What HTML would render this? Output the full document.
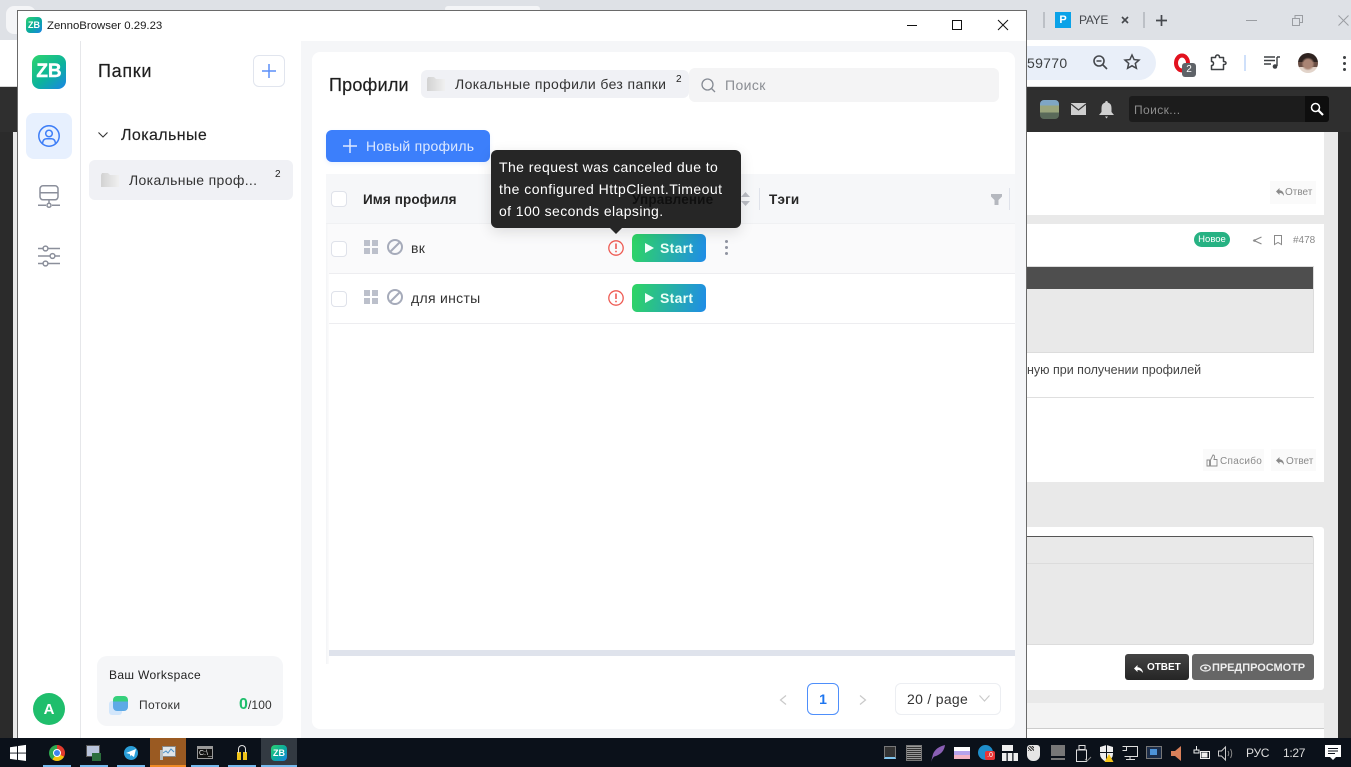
<!DOCTYPE html>
<html lang="ru"><head><meta charset="utf-8"><title>ZennoBrowser</title>
<style>
*{box-sizing:border-box}
html,body{margin:0;padding:0}
body{width:1351px;height:767px;overflow:hidden;position:relative;background:#e9e9e9;font-family:"Liberation Sans",sans-serif;color:#1f1f1f}
.a{position:absolute}
.t{position:absolute;white-space:nowrap;line-height:20px}
svg{position:absolute;overflow:visible}
.f{position:absolute;width:18px;height:14px;background:linear-gradient(90deg,#d2d2d2,#f0f0f0);clip-path:polygon(0 2px,1px 0,7px 0,9px 2px,100% 2px,100% 100%,0 100%)}
</style></head><body>
<!-- background browser -->
<div class="a" style="left:0;top:0;width:1351px;height:40px;background:#dee1e6"></div>
<div class="a" style="left:6px;top:6px;width:30px;height:28px;background:#f4f5f7;border-radius:8px"></div>
<div class="a" style="left:445px;top:6px;width:95px;height:6px;background:#f4f5f7;border-radius:6px"></div>
<div class="a" style="left:0;top:40px;width:1351px;height:47px;background:#fff"></div>
<div class="a" style="left:0;top:86px;width:1351px;height:1px;background:#d5d5d5"></div>
<div class="a" style="left:1000px;top:46px;width:156px;height:34px;background:#e9eff9;border-radius:0 17px 17px 0"></div>
<div class="a" style="left:0;top:87px;width:13px;height:651px;background:#2b2b2b"></div>
<div class="a" style="left:1338px;top:87px;width:13px;height:651px;background:#2b2b2b"></div>
<div class="a" style="left:0;top:87px;width:1351px;height:45px;background:#2f2f2f"></div>
<!-- tabs -->
<div class="a" style="left:1043px;top:12px;width:2px;height:16px;background:#bcc0c6"></div>
<div class="a" style="left:1055px;top:12px;width:16px;height:16px;background:#0aa2e8;color:#fff;font:700 11px/16px 'Liberation Sans',sans-serif;text-align:center">P</div>
<div class="t" style="left:1079px;top:10px;font-size:12px;letter-spacing:-.3px;color:#45484d;width:30px;overflow:hidden">PAYEE</div>
<svg style="left:1121px;top:16px" width="8" height="8"><path d="M1 1l6 6M7 1l-6 6" stroke="#45484d" stroke-width="1.600"/></svg>
<div class="a" style="left:1143px;top:12px;width:2px;height:16px;background:#bcc0c6"></div>
<svg style="left:1156px;top:15px" width="11" height="11"><path d="M5.500 0v11M0 5.500h11" stroke="#45484d" stroke-width="1.700"/></svg>
<svg style="left:1246px;top:20px" width="11" height="1"><path d="M0 .5h11" stroke="#9a9da2"/></svg>
<svg style="left:1292px;top:15px" width="11" height="11"><path d="M.5 3.500h7v7h-7zM3 3.500V.5h7.500v7H7.500" fill="none" stroke="#9a9da2"/></svg>
<svg style="left:1338px;top:15px" width="11" height="11"><path d="M.5.500l10 10M10.500.500l-10 10" stroke="#9a9da2"/></svg>
<!-- toolbar -->
<div class="t" style="left:1027px;top:53px;font-size:14px;letter-spacing:.3px;color:#3d4043">59770</div>
<svg style="left:1093px;top:55px" width="15" height="15" viewBox="0 0 15 15" fill="none" stroke="#45484d" stroke-width="1.600"><circle cx="6" cy="6" r="5"/><path d="M9.500 9.500l4.500 4.500M3.500 6h5"/></svg>
<svg style="left:1124px;top:54px" width="16" height="16" viewBox="0 0 16 16"><path d="M8 1l2.100 4.600 4.900.5-3.700 3.300 1.100 4.900L8 11.800l-4.400 2.500 1.100-4.900L1 6.100l4.900-.5z" fill="none" stroke="#45484d" stroke-width="1.500"/></svg>
<svg style="left:1174px;top:54px" width="16" height="18" viewBox="0 0 16 18"><ellipse cx="8" cy="9" rx="6" ry="7.500" fill="none" stroke="#e2111e" stroke-width="4"/></svg>
<div class="a" style="left:1182px;top:63px;width:14px;height:14px;background:#5f6368;border-radius:3px;color:#fff;font:10px/14px 'Liberation Sans',sans-serif;text-align:center">2</div>
<svg style="left:1210px;top:54px" width="17" height="17" viewBox="0 0 17 17"><path d="M1.500 3.500h4q0-2.500 2-2.500t2 2.500h4v4q2.500 0 2.500 1.500t-2.500 1.500v5h-12v-4q2 0 2-2t-2-2z" fill="none" stroke="#3d4043" stroke-width="1.500" stroke-linejoin="round"/></svg>
<div class="a" style="left:1244px;top:55px;width:2px;height:16px;background:#cfe0fa"></div>
<svg style="left:1264px;top:56px" width="16" height="13" viewBox="0 0 16 13"><path d="M0 1h11M0 4.500h11M0 8h7M13 1h3M13 1v9" fill="none" stroke="#3d4043" stroke-width="1.400"/><circle cx="11" cy="10.500" r="2.300" fill="#3d4043"/></svg>
<div class="a" style="left:1298px;top:53px;width:20px;height:20px;border-radius:50%;background:radial-gradient(circle at 50% 55%,#a98474 0 30%,transparent 45%),linear-gradient(#2f2320 0 45%,#6a4f45 45% 70%,#e2d4ca 70%)"></div>
<div class="a" style="left:1343px;top:56px;width:3px;height:3px;background:#3d4043;border-radius:50%;box-shadow:0 6px #3d4043,0 12px #3d4043"></div>
<!-- site header -->
<div class="a" style="left:1040px;top:100px;width:19px;height:19px;border-radius:4px;background:linear-gradient(#7fa6c4 0 30%,#9aa57c 30% 65%,#5a6a5a 65%)"></div>
<div class="a" style="left:1071px;top:103px;width:15px;height:12px;background:#cfcfcf"></div>
<svg style="left:1071px;top:103px" width="15" height="12"><path d="M0 1l7.500 6L15 1" fill="none" stroke="#3a3a3a" stroke-width="1.200"/></svg>
<svg style="left:1099px;top:101px" width="15" height="18" viewBox="0 0 15 18"><path d="M7.500 0q1.300 0 1.300 1.500 3.700 1 3.700 5.500v4l2.500 3H0l2.500-3V7q0-4.500 3.700-5.500Q6.200 0 7.500 0zM6 15.500h3L7.500 17.500z" fill="#cfcfcf"/></svg>
<div class="a" style="left:1129px;top:96px;width:200px;height:26px;background:#1c1c1c;border-radius:3px"></div>
<div class="a" style="left:1305px;top:96px;width:24px;height:26px;background:#0e0e0e;border-radius:0 3px 3px 0"></div>
<div class="t" style="left:1134px;top:100px;font-size:12px;letter-spacing:.4px;color:#8d8d8d">Поиск...</div>
<svg style="left:1310px;top:102px" width="14" height="14" viewBox="0 0 14 14" fill="none" stroke="#fff"><circle cx="5.500" cy="5.500" r="4" stroke-width="1.500"/><path d="M8.500 8.500l4.500 4.500" stroke-width="2.200"/></svg>
<!-- forum cards -->
<div class="a" style="left:1027px;top:132px;width:297px;height:83px;background:#fff"></div>
<div class="a" style="left:1270px;top:181px;width:46px;height:23px;background:#fafafa"></div>
<div class="t" style="left:1285px;top:183px;font-size:10px;color:#8a8a8a">Ответ</div>
<svg style="left:1276px;top:188px" width="8" height="8"><path d="M0 3.500L3.500 0v2.200C6.500 2.200 8 5 8 8 6.500 5.500 5.500 5 3.500 5v2z" fill="#8a8a8a"/></svg>
<div class="a" style="left:1027px;top:224px;width:297px;height:258px;background:#fff"></div>
<div class="a" style="left:1194px;top:232px;width:36px;height:15px;background:#27b283;border-radius:8px;color:#fff;font:9.500px/16px 'Liberation Sans',sans-serif;text-align:center">Новое</div>
<svg style="left:1253px;top:236px" width="9" height="9"><path d="M8.500 1L1 4.500 8.500 8" fill="none" stroke="#8a8a8a" stroke-width="1.200"/><circle cx="1.500" cy="4.500" r="1.300" fill="#8a8a8a"/></svg>
<svg style="left:1274px;top:235px" width="9" height="10"><path d="M.5.500h7v9l-3.500-2-3.500 2z" fill="none" stroke="#8a8a8a"/></svg>
<div class="t" style="left:1293px;top:231px;font-size:10px;color:#8a8a8a">#478</div>
<div class="a" style="left:1027px;top:266px;width:287px;height:87px;background:#e9e9e9;border:1px solid #dcdcdc;border-left:0"></div>
<div class="a" style="left:1027px;top:267px;width:286px;height:22px;background:#4e4e4e"></div>
<div class="t" style="left:1027px;top:360px;font-size:12.500px;color:#444">ную при получении профилей</div>
<div class="a" style="left:1027px;top:397px;width:287px;height:1px;background:#dfdfdf"></div>
<div class="a" style="left:1203px;top:449px;width:61px;height:22px;background:#fafafa"></div>
<div class="t" style="left:1220px;top:452px;font-size:10px;letter-spacing:.3px;color:#8a8a8a">Спасибо</div>
<svg style="left:1207px;top:455px" width="10" height="11"><path d="M0 5h2.500v6H0zM3.500 5L6 0q1.500 0 1.500 2L7 4.500h3V11H3.500z" fill="none" stroke="#8a8a8a" stroke-width=".9"/></svg>
<div class="a" style="left:1271px;top:449px;width:45px;height:22px;background:#fafafa"></div>
<div class="t" style="left:1286px;top:452px;font-size:10px;color:#8a8a8a">Ответ</div>
<svg style="left:1276px;top:457px" width="8" height="8"><path d="M0 3.500L3.500 0v2.200C6.500 2.200 8 5 8 8 6.500 5.500 5.500 5 3.500 5v2z" fill="#8a8a8a"/></svg>
<div class="a" style="left:1027px;top:527px;width:297px;height:163px;background:#fff;border-radius:0 3px 3px 0"></div>
<div class="a" style="left:1027px;top:536px;width:287px;height:109px;background:#e9e9e9;border:1px solid #dcdcdc;border-top:1px solid #555;border-left:0;border-radius:0 3px 3px 0"></div>
<div class="a" style="left:1027px;top:563px;width:286px;height:1px;background:#dcdcdc"></div>
<div class="a" style="left:1125px;top:654px;width:64px;height:26px;background:linear-gradient(#444,#252525);border-radius:3px"></div>
<svg style="left:1134px;top:665px" width="9" height="8"><path d="M0 3.500L3.500 0v2.200C6.500 2.200 9 5 9 8 7 5.500 5.500 5 3.500 5v2z" fill="#fff"/></svg>
<div class="t" style="left:1147px;top:658px;font-size:10px;font-weight:700;color:#fff;letter-spacing:-.05px">ОТВЕТ</div>
<div class="a" style="left:1192px;top:654px;width:122px;height:26px;background:#666;border-radius:3px"></div>
<svg style="left:1200px;top:664px" width="11" height="8"><ellipse cx="5.500" cy="4" rx="4.800" ry="3" fill="none" stroke="#eee" stroke-width="1.300"/><circle cx="5.500" cy="4" r="1.400" fill="#eee"/></svg>
<div class="t" style="left:1212px;top:658px;font-size:11px;font-weight:700;color:#eee;letter-spacing:-.05px">ПРЕДПРОСМОТР</div>
<div class="a" style="left:1027px;top:703px;width:297px;height:25px;background:#f3f3f3"></div>
<div class="a" style="left:1027px;top:728px;width:297px;height:10px;background:#fff;border-top:1px solid #ccc"></div>
<!-- window -->
<div class="a" style="left:17px;top:10px;width:1010px;height:728px;background:#fff;border:1px solid #6a6a6a;border-bottom:0"></div>
<div class="a" style="left:26px;top:17px;width:16px;height:16px;border-radius:4px;background:linear-gradient(135deg,#2dd36f,#0aa8a0 55%,#1c83e8);color:#fff;font:700 9px/16px 'Liberation Sans',sans-serif;text-align:center">ZB</div>
<div class="t" style="left:47px;top:16px;font-size:11.400px;color:#1a1a1a">ZennoBrowser 0.29.23</div>
<svg style="left:907px;top:25px" width="10" height="1"><path d="M0 .5h10" stroke="#111"/></svg>
<svg style="left:952px;top:20px" width="10" height="10"><rect x=".5" y=".5" width="9" height="9" fill="none" stroke="#111"/></svg>
<svg style="left:998px;top:20px" width="10" height="10"><path d="M0 0l10 10M10 0L0 10" stroke="#111"/></svg>
<!-- left rail -->
<div class="a" style="left:80px;top:41px;width:1px;height:697px;background:#e6e7ea"></div>
<div class="a" style="left:32px;top:55px;width:34px;height:34px;border-radius:8px;background:linear-gradient(140deg,#2ed46c,#0cb39c 55%,#1a84e6);color:#fff;font:700 19px/34px 'Liberation Sans',sans-serif;text-align:center;-webkit-text-stroke:.4px #fff">ZB</div>
<div class="a" style="left:26px;top:113px;width:46px;height:46px;border-radius:8px;background:#e7f0fe"></div>
<svg style="left:38px;top:125px" width="22" height="22" viewBox="0 0 22 22" fill="none" stroke="#3e7ef7" stroke-width="1.500"><circle cx="11" cy="11" r="10.200"/><circle cx="11" cy="8.500" r="3.300"/><path d="M4.500 18.500q.5-4.800 4-4.800h5q3.500 0 4 4.800"/></svg>
<svg style="left:38px;top:185px" width="22" height="23" viewBox="0 0 22 23" fill="none" stroke="#8b8f9b" stroke-width="1.500"><rect x="2" y=".8" width="18" height="14" rx="3"/><path d="M2 7.800h18M11 15v3.500M0 20.300h8M14 20.300h8"/><circle cx="11" cy="20.300" r="2"/></svg>
<svg style="left:38px;top:245px" width="22" height="22" viewBox="0 0 22 22" fill="none" stroke="#8b8f9b" stroke-width="1.500"><path d="M0 3.500h5M10 3.500h12M0 11h12M17 11h5M0 18.500h5M10 18.500h12"/><circle cx="7.500" cy="3.500" r="2.400"/><circle cx="14.500" cy="11" r="2.400"/><circle cx="7.500" cy="18.500" r="2.400"/></svg>
<div class="a" style="left:33px;top:693px;width:32px;height:32px;border-radius:50%;background:#1fbe6c;color:#fff;font:700 15px/33px 'Liberation Sans',sans-serif;text-align:center">A</div>
<!-- folders -->
<div class="t" style="left:98px;top:61px;font-size:18px;letter-spacing:.7px;color:#1f1f1f;-webkit-text-stroke:.2px #1f1f1f">Папки</div>
<div class="a" style="left:253px;top:55px;width:32px;height:32px;border:1px solid #e1e5ee;border-radius:6px"></div>
<svg style="left:262px;top:64px" width="14" height="14"><path d="M7 0v14M0 7h14" stroke="#5b8ff9" stroke-width="1.500"/></svg>
<svg style="left:98px;top:132px" width="10" height="6"><path d="M.5.500L5 5 9.500.5" fill="none" stroke="#333" stroke-width="1.100"/></svg>
<div class="t" style="left:121px;top:126px;font-size:16px;letter-spacing:.4px;color:#222;-webkit-text-stroke:.15px #222">Локальные</div>
<div class="a" style="left:89px;top:160px;width:204px;height:40px;background:#f0f1f5;border-radius:6px"></div>
<div class="f" style="left:101px;top:173px"></div>
<div class="t" style="left:129px;top:170px;font-size:14px;letter-spacing:.35px;color:#333">Локальные проф...</div>
<div class="t" style="left:275px;top:165px;font-size:10px;color:#222">2</div>
<div class="a" style="left:97px;top:656px;width:186px;height:70px;background:#f5f6f8;border-radius:10px"></div>
<div class="t" style="left:109px;top:665px;font-size:12px;letter-spacing:.35px;color:#222">Ваш Workspace</div>
<div class="a" style="left:109px;top:701px;width:13px;height:14px;background:#d2e6fb;border-radius:3px"></div>
<div class="a" style="left:113px;top:696px;width:15px;height:15px;border-radius:4px;background:linear-gradient(#36d07c 0 35%,#5da9e6 35%)"></div>
<div class="t" style="left:139px;top:695px;font-size:12px;letter-spacing:.4px;color:#333">Потоки</div>
<div class="t" style="left:239px;top:695px;font-size:12px;color:#333;letter-spacing:.1px"><span style="color:#1fbe6c;font-size:16px;font-weight:700">0</span>/100</div>
<!-- main -->
<div class="a" style="left:301px;top:41px;width:725px;height:697px;background:#f5f6f8"></div>
<div class="a" style="left:312px;top:52px;width:703px;height:677px;background:#fff;border-radius:8px"></div>
<div class="t" style="left:329px;top:75px;font-size:18px;letter-spacing:.2px;color:#1f1f1f;-webkit-text-stroke:.2px #1f1f1f">Профили</div>
<div class="a" style="left:421px;top:70px;width:268px;height:28px;background:#f0f1f5;border-radius:6px"></div>
<div class="f" style="left:427px;top:77px"></div>
<div class="t" style="left:455px;top:74px;font-size:14px;letter-spacing:.38px;color:#333">Локальные профили без папки</div>
<div class="t" style="left:676px;top:70px;font-size:10px;color:#222">2</div>
<div class="a" style="left:689px;top:68px;width:310px;height:34px;background:#f4f4f5;border-radius:6px"></div>
<svg style="left:701px;top:78px" width="15" height="15" viewBox="0 0 15 15" fill="none" stroke="#868b94" stroke-width="1.300"><circle cx="6.500" cy="6.500" r="5.500"/><path d="M10.500 10.500L14 14"/></svg>
<div class="t" style="left:725px;top:75px;font-size:14px;letter-spacing:.4px;color:#8a8d93">Поиск</div>
<div class="a" style="left:326px;top:130px;width:164px;height:32px;background:#3c7ffb;border-radius:6px;box-shadow:0 2px 4px rgba(60,127,251,.1)"></div>
<svg style="left:343px;top:139px" width="14" height="14"><path d="M7 0v14M0 7h14" stroke="#dfe9ff" stroke-width="1.500"/></svg>
<div class="t" style="left:366px;top:136px;font-size:14px;letter-spacing:.25px;color:#dce8ff">Новый профиль</div>
<!-- table -->
<div class="a" style="left:326px;top:174px;width:689px;height:49px;background:#f6f7f9"></div>
<div class="a" style="left:326px;top:223px;width:689px;height:1px;background:#f0f1f3"></div>
<div class="a" style="left:326px;top:224px;width:689px;height:49px;background:#fafafb"></div>
<div class="a" style="left:326px;top:273px;width:689px;height:1px;background:#ededf0"></div>
<div class="a" style="left:326px;top:323px;width:689px;height:1px;background:#ededf0"></div>
<div class="a" style="left:326px;top:224px;width:3px;height:440px;background:linear-gradient(90deg,#f3f4f6,#fbfbfc)"></div>
<div class="a" style="left:331px;top:191px;width:16px;height:16px;border:1px solid #dfe2ea;border-radius:4px;background:#fff"></div>
<div class="a" style="left:331px;top:241px;width:16px;height:16px;border:1px solid #dfe2ea;border-radius:4px;background:#fff"></div>
<div class="a" style="left:331px;top:291px;width:16px;height:16px;border:1px solid #dfe2ea;border-radius:4px;background:#fff"></div>
<div class="t" style="left:363px;top:190px;font-size:13.500px;font-weight:700;letter-spacing:.1px;color:#262626">Имя профиля</div>
<div class="t" style="left:632px;top:190px;font-size:13.500px;font-weight:700;letter-spacing:.15px;color:#0d0d0d">Управление</div>
<svg style="left:741px;top:192px" width="9" height="14"><path d="M4.500 0L9 5H0zM4.500 14L0 9h9z" fill="#b9bcc3"/></svg>
<div class="a" style="left:759px;top:188px;width:1px;height:22px;background:#dfe2ea"></div>
<div class="a" style="left:1009px;top:188px;width:1px;height:22px;background:#dfe2ea"></div>
<div class="t" style="left:769px;top:190px;font-size:13.500px;font-weight:700;letter-spacing:.2px;color:#262626">Тэги</div>
<svg style="left:991px;top:194px" width="11" height="11"><path d="M0 0h11v2.500L7.500 6v5h-4V6L0 2.500z" fill="#b5b8bf"/></svg>
<!-- rows -->
<svg style="left:364px;top:240px" width="14" height="14"><path d="M0 0h6v6H0zM8 0h6v6H8zM0 8h6v6H0zM8 8h6v6H8z" fill="#bcc0cb"/></svg>
<svg style="left:387px;top:239px" width="16" height="16" viewBox="0 0 16 16" fill="none" stroke="#a6abba" stroke-width="2"><circle cx="8" cy="8" r="7"/><path d="M3 13L13 3"/></svg>
<div class="t" style="left:411px;top:238px;font-size:14px;letter-spacing:.3px;color:#333">вк</div>
<svg style="left:364px;top:290px" width="14" height="14"><path d="M0 0h6v6H0zM8 0h6v6H8zM0 8h6v6H0zM8 8h6v6H8z" fill="#bcc0cb"/></svg>
<svg style="left:387px;top:289px" width="16" height="16" viewBox="0 0 16 16" fill="none" stroke="#a6abba" stroke-width="2"><circle cx="8" cy="8" r="7"/><path d="M3 13L13 3"/></svg>
<div class="t" style="left:411px;top:288px;font-size:14px;letter-spacing:.3px;color:#333">для инсты</div>
<svg style="left:608px;top:240px" width="16" height="16" viewBox="0 0 16 16" fill="none" stroke="#ee5a52" stroke-width="1.300"><circle cx="8" cy="8" r="7.200"/><path d="M8 3.500v5.500M8 10.800v1.500" stroke-width="1.600"/></svg>
<svg style="left:608px;top:290px" width="16" height="16" viewBox="0 0 16 16" fill="none" stroke="#ee5a52" stroke-width="1.300"><circle cx="8" cy="8" r="7.200"/><path d="M8 3.500v5.500M8 10.800v1.500" stroke-width="1.600"/></svg>
<div class="a" style="left:632px;top:234px;width:74px;height:28px;border-radius:5px;background:linear-gradient(100deg,#2fd662,#1f8ce8)"></div>
<svg style="left:644px;top:243px" width="10" height="10"><path d="M1 0l9 5-9 5z" fill="#f2fffb"/></svg>
<div class="t" style="left:660px;top:238px;font-size:14px;font-weight:700;letter-spacing:.3px;color:#eafff6">Start</div>
<div class="a" style="left:632px;top:284px;width:74px;height:28px;border-radius:5px;background:linear-gradient(100deg,#2fd662,#1f8ce8)"></div>
<svg style="left:644px;top:293px" width="10" height="10"><path d="M1 0l9 5-9 5z" fill="#f2fffb"/></svg>
<div class="t" style="left:660px;top:288px;font-size:14px;font-weight:700;letter-spacing:.3px;color:#eafff6">Start</div>
<div class="a" style="left:725px;top:240px;width:3px;height:3px;background:#8f93a0;border-radius:50%;box-shadow:0 6px #8f93a0,0 12px #8f93a0"></div>
<!-- tooltip -->
<div class="a" style="left:491px;top:150px;width:250px;height:78px;background:#262626;border-radius:6px;box-shadow:0 4px 14px rgba(0,0,0,.12)"></div>
<svg style="left:610px;top:228px" width="12" height="6"><path d="M0 0h12L6 6z" fill="#262626"/></svg>
<div class="t" style="left:499px;top:157px;font-size:14px;letter-spacing:.42px;color:#fff">The request was canceled due to</div>
<div class="t" style="left:499px;top:179px;font-size:14px;letter-spacing:.47px;color:#fff">the configured HttpClient.Timeout</div>
<div class="t" style="left:499px;top:201px;font-size:14px;letter-spacing:.4px;color:#fff">of 100 seconds elapsing.</div>
<div class="t" style="left:632px;top:190px;font-size:13.500px;font-weight:700;letter-spacing:.15px;color:#0d0d0d;opacity:.9">Управление</div>
<!-- scrollbar & pagination -->
<div class="a" style="left:329px;top:650px;width:686px;height:6px;background:#dfe3ec"></div>
<svg style="left:779px;top:695px" width="8" height="10"><path d="M7 .5L1.500 5 7 9.500" fill="none" stroke="#c9c9c9" stroke-width="1.200"/></svg>
<div class="a" style="left:807px;top:683px;width:32px;height:32px;border:1px solid #4e8ffb;border-radius:6px;color:#1d75f0;font:700 14px/30px 'Liberation Sans',sans-serif;text-align:center">1</div>
<svg style="left:859px;top:695px" width="8" height="10"><path d="M1 .5L6.500 5 1 9.500" fill="none" stroke="#c9c9c9" stroke-width="1.200"/></svg>
<div class="a" style="left:895px;top:683px;width:106px;height:32px;border:1px solid #eceef2;border-radius:6px"></div>
<div class="t" style="left:907px;top:689px;font-size:14px;letter-spacing:.3px;color:#333">20 / page</div>
<svg style="left:979px;top:695px" width="11" height="7"><path d="M.5.500L5.500 6 10.500.5" fill="none" stroke="#c9c9c9" stroke-width="1.100"/></svg>
<!-- taskbar -->
<div class="a" style="left:0;top:738px;width:1351px;height:29px;background:#0b111a"></div>
<svg style="left:10px;top:745px" width="16" height="16"><path d="M0 2.200L7 1.200v6.400H0zM8 1l8-1.100v7.700H8zM0 8.500h7v6.400l-7-1zM8 8.500h8V16l-8-1.100z" fill="#fff"/></svg>
<div class="a" style="left:49px;top:745px;width:16px;height:16px;border-radius:50%;background:conic-gradient(#e33b2e 0 33%,#f4c20d 33% 60%,#2da94f 60% 100%)"></div>
<div class="a" style="left:53px;top:749px;width:8px;height:8px;border-radius:50%;background:#3f83ee;border:1px solid #fff"></div>
<div class="a" style="left:43px;top:765px;width:28px;height:2px;background:#76b9ed"></div>
<div class="a" style="left:86px;top:745px;width:14px;height:12px;background:#b9c4dc;border:1px solid #555"></div>
<div class="a" style="left:92px;top:753px;width:9px;height:8px;background:#2c6e3c"></div>
<div class="a" style="left:80px;top:765px;width:28px;height:2px;background:#76b9ed"></div>
<div class="a" style="left:124px;top:746px;width:14px;height:14px;border-radius:50%;background:#2a9ed8"></div>
<svg style="left:126px;top:749px" width="10" height="8"><path d="M0 4l10-4-2 8-3-2-1 1.500V5z" fill="#fff"/></svg>
<div class="a" style="left:117px;top:765px;width:28px;height:2px;background:#76b9ed"></div>
<div class="a" style="left:150px;top:738px;width:36px;height:29px;background:#9a5a22"></div>
<div class="a" style="left:162px;top:746px;width:14px;height:11px;background:#dfe5ea;border:1px solid #888"></div>
<svg style="left:163px;top:748px" width="12" height="7"><path d="M0 5l3-2 2 2 3-4 3 3" fill="none" stroke="#4b8fc7"/></svg>
<div class="a" style="left:160px;top:750px;width:3px;height:10px;background:#b6bcc0"></div>
<div class="a" style="left:150px;top:765px;width:36px;height:2px;background:#f08a24"></div>
<div class="a" style="left:197px;top:746px;width:16px;height:13px;background:#111;border:1px solid #999;border-top:3px solid #999"></div>
<div class="t" style="left:199px;top:744px;font-size:7px;color:#eee">C:\_</div>
<div class="a" style="left:191px;top:765px;width:28px;height:2px;background:#76b9ed"></div>
<div class="a" style="left:237px;top:752px;width:4px;height:8px;background:#f0c419"></div>
<div class="a" style="left:243px;top:752px;width:4px;height:8px;background:#f0c419"></div>
<div class="a" style="left:238px;top:745px;width:8px;height:8px;border:1px solid #ddd;border-bottom:0;border-radius:4px 4px 0 0"></div>
<div class="a" style="left:228px;top:765px;width:28px;height:2px;background:#76b9ed"></div>
<div class="a" style="left:261px;top:738px;width:36px;height:29px;background:#333a42"></div>
<div class="a" style="left:271px;top:745px;width:16px;height:16px;border-radius:4px;background:linear-gradient(135deg,#2dd36f,#0aa8a0 55%,#1c83e8);color:#fff;font:700 9px/16px 'Liberation Sans',sans-serif;text-align:center">ZB</div>
<div class="a" style="left:261px;top:765px;width:36px;height:2px;background:#76b9ed"></div>
<!-- tray -->
<div class="a" style="left:884px;top:746px;width:12px;height:13px;background:#333;border:1px solid #777;border-bottom:2px solid #7fc4ee"></div>
<div class="a" style="left:906px;top:745px;width:16px;height:16px;background:repeating-linear-gradient(#999 0 1px,#333 1px 2px);border:1px solid #777"></div>
<svg style="left:931px;top:745px" width="15" height="17"><path d="M14 0Q5 2 2 9L0 17Q2 11 5 11 13 8 14 0z" fill="#8a5fb5"/></svg>
<div class="a" style="left:954px;top:747px;width:16px;height:12px;background:linear-gradient(#fff 0 33%,#b5a3ec 33% 66%,#f3b3c4 66%)"></div>
<div class="a" style="left:978px;top:745px;width:15px;height:15px;border-radius:50%;background:#1f8ecb"></div>
<div class="a" style="left:985px;top:751px;width:10px;height:9px;background:#ea3535;border-radius:2px;color:#fff;font:7px/9px 'Liberation Sans',sans-serif;text-align:center">.0</div>
<svg style="left:1002px;top:745px" width="16" height="16"><path d="M0 0h11v6H0zM0 8h4.500v8H0zM5.750 8h4.500v8h-4.500zM11.500 8H16v8h-4.500z" fill="#eee"/></svg>
<div class="a" style="left:1027px;top:745px;width:13px;height:16px;background:#e5e5e5;border-radius:3px 3px 6px 6px"></div>
<div class="a" style="left:1028px;top:746px;width:6px;height:5px;background:repeating-linear-gradient(45deg,#333 0 1px,#ddd 1px 2px)"></div>
<div class="a" style="left:1051px;top:745px;width:14px;height:11px;background:#777"></div>
<div class="a" style="left:1051px;top:758px;width:14px;height:2px;background:#777"></div>
<svg style="left:1076px;top:745px" width="16" height="17" fill="none" stroke="#ddd"><path d="M3 .5h6v4H3zM.5 5h10v11.500H.5z"/><path d="M9 14l2 2 4-4" stroke="#888"/></svg>
<svg style="left:1099px;top:745px" width="15" height="17"><path d="M7.500 0L14 2v7q0 5-6.500 8Q1 14 1 9V2z" fill="#eee"/><path d="M7 0h1v17H7zM1 7h13v1H1z" fill="#0b111a"/><path d="M10 9l4.500 8h-9z" fill="#f5c518"/></svg>
<svg style="left:1122px;top:746px" width="16" height="14" fill="none" stroke="#ddd"><path d="M2.500.5h13v10h-13M8 10.500v3M4 13.500h9M.5.500h4v4h-4"/></svg>
<div class="a" style="left:1146px;top:746px;width:16px;height:13px;background:#1b2c48;border:1px solid #777"></div>
<div class="a" style="left:1150px;top:749px;width:7px;height:6px;background:#4d93d8"></div>
<svg style="left:1171px;top:746px" width="13" height="15"><path d="M0 5h4l6-5v15l-6-5H0z" fill="#d9805a"/></svg>
<svg style="left:1194px;top:746px" width="16" height="15" fill="none" stroke="#eee"><path d="M6.500 5.500h9v7h-9z"/><path d="M0 4h5v3H0zM2.500 0v4"/><path d="M8 7h5v4H8z" fill="#eee"/></svg>
<svg style="left:1218px;top:746px" width="16" height="15" fill="none" stroke="#ccc"><path d="M.5 5h3l4-4v13l-4-4h-3z"/><path d="M10 5q1.500 2.500 0 5M12.500 3q2.500 4.500 0 9" stroke="#888"/></svg>
<div class="t" style="left:1246px;top:743px;font-size:12px;letter-spacing:-.3px;color:#ddd">РУС</div>
<div class="t" style="left:1283px;top:743px;font-size:12px;letter-spacing:-.3px;color:#ddd">1:27</div>
<svg style="left:1325px;top:745px" width="16" height="16"><path d="M0 0h16v12h-5l-3 3-3-3H0z" fill="#fff"/><path d="M3 3.500h10M3 6h10M3 8.500h7" stroke="#0b111a"/></svg>
</body></html>
